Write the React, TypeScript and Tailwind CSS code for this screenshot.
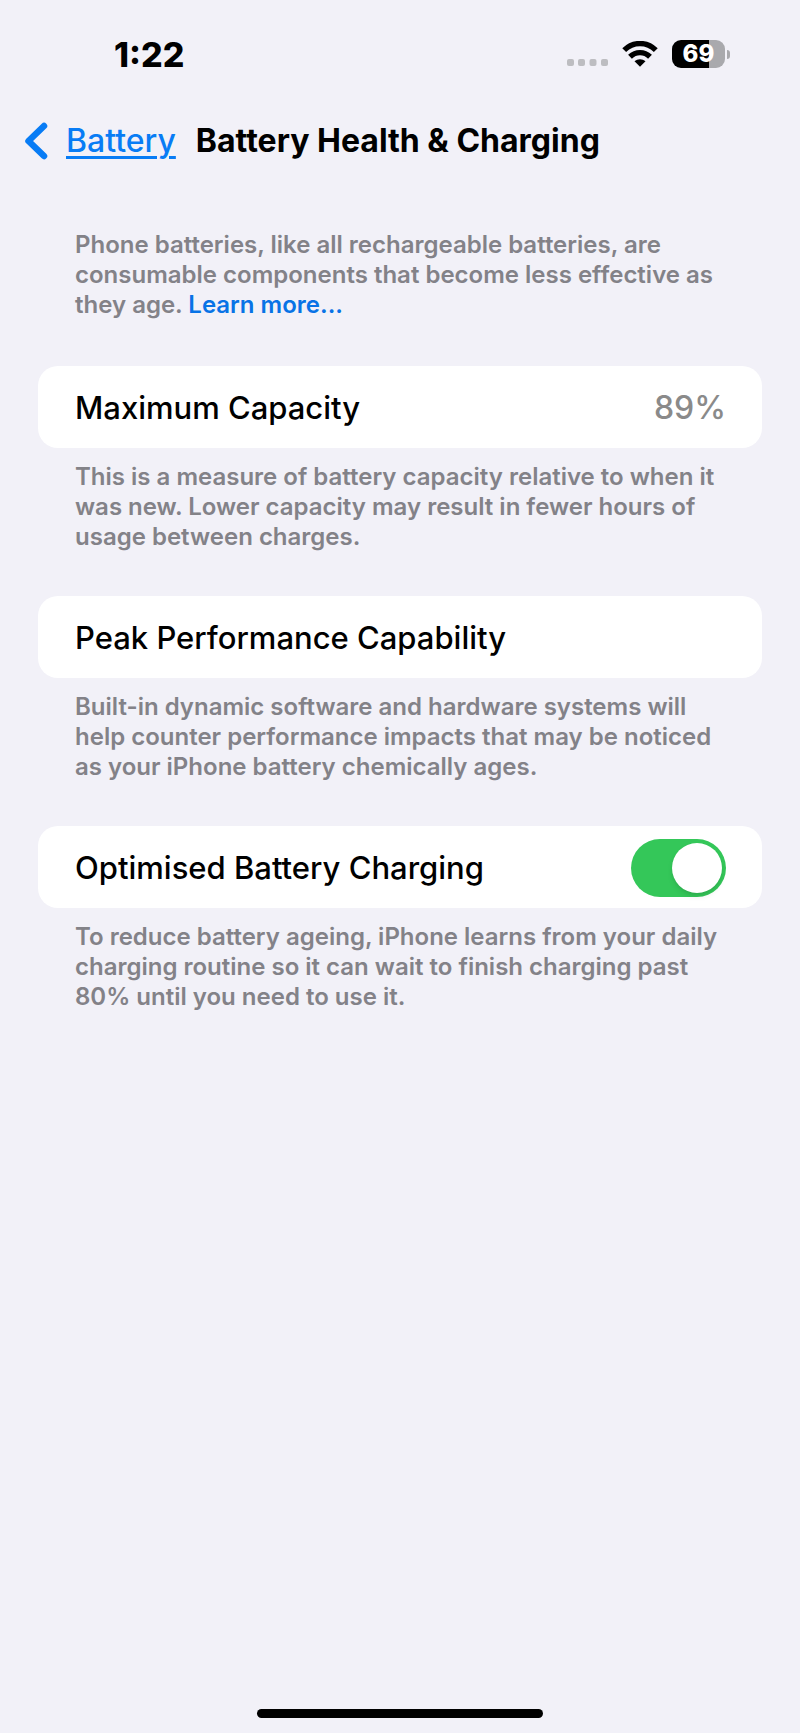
import type { ReactNode } from "react";

function StatusBar() {
  return (
    <div className="flex h-27 items-center justify-between pr-[70px] pl-[114px]">
      <span className="pt-[2px] text-[34px] leading-10 font-extrabold">1:22</span>
      <div className="flex items-center gap-[14px]">
        <svg className="mt-4 h-[7px] w-[41px]" viewBox="0 0 41 7" fill="#bdbdc1" aria-hidden="true">
          <rect x="0" width="7" height="7" rx="2" />
          <rect x="11" width="7" height="7" rx="2" />
          <rect x="22.500" width="7" height="7" rx="2" />
          <rect x="34" width="7" height="7" rx="2" />
        </svg>
        <svg className="h-[26px] w-9" viewBox="0 0 36 26" aria-hidden="true">
          <path d="M2.200 9.200C11 .3 25 .3 33.800 9.200" fill="none" stroke="#000" strokeWidth="5.400" />
          <path d="M8 15.800C13.700 10.200 22.300 10.200 28 15.800" fill="none" stroke="#000" strokeWidth="5.400" />
          <path d="M12.500 20.300C15.500 17.600 20.500 17.600 23.500 20.300L18 25.800Z" />
        </svg>
        <div className="flex items-center gap-[2px]">
          <div className="flex h-7 w-[53px] items-center justify-center rounded-[9px] bg-linear-to-r from-black from-70% to-[#a9a9ad] to-70% text-2xl leading-7 font-extrabold text-white">
            69
          </div>
          <div className="h-[9px] w-[3px] rounded-r-full bg-[#a9a9ad]" />
        </div>
      </div>
    </div>
  );
}

function Section({ children, note }: { children: ReactNode; note: ReactNode }) {
  return (
    <section className="mb-11">
      <div className="flex h-[82px] items-center justify-between rounded-[20px] bg-white pt-[2px] pr-9 pl-[37px] text-[31px] font-medium">
        {children}
      </div>
      <Note className="mt-[14px]">{note}</Note>
    </section>
  );
}

function Note({ children, className = "" }: { children: ReactNode; className?: string }) {
  return (
    <p className={`px-[37px] text-2xl leading-[30px] font-[560] whitespace-nowrap text-[#838288] ${className}`}>
      {children}
    </p>
  );
}

export default function App() {
  return (
    <div className="flex min-h-screen flex-col bg-[#f2f1f8] font-['Inter',sans-serif] text-black">
      <StatusBar />
      <header className="flex h-[66px] items-center pl-6 text-[32px]">
        <a href="#battery" className="flex items-center gap-[18px] text-[#087cf5]">
          <svg className="h-[38px] w-6" viewBox="0 0 24 38" fill="none" stroke="currentColor" strokeWidth="6.500" aria-hidden="true">
            <path d="M20 4 4.500 19 20 34" strokeLinecap="round" strokeLinejoin="round" />
          </svg>
          <span className="font-medium underline decoration-[3px] underline-offset-4">Battery</span>
        </a>
        <h1 className="ml-5 font-bold whitespace-nowrap">Battery Health &amp; Charging</h1>
      </header>

      <main className="px-[38px] pt-14">
        <Note className="mb-[46px]">
          Phone batteries, like all rechargeable batteries, are
          <br />
          consumable components that become less effective as
          <br />
          they age.{" "}
          <a href="#learn-more" className="text-[#0873e6]">
            Learn more...
          </a>
        </Note>

        <Section
          note={
            <>
              This is a measure of battery capacity relative to when it
              <br />
              was new. Lower capacity may result in fewer hours of
              <br />
              usage between charges.
            </>
          }
        >
          <h2>Maximum Capacity</h2>
          <span className="text-[32px] text-[#8a8a8a]">89%</span>
        </Section>

        <Section
          note={
            <>
              Built-in dynamic software and hardware systems will
              <br />
              help counter performance impacts that may be noticed
              <br />
              as your iPhone battery chemically ages.
            </>
          }
        >
          <h2>Peak Performance Capability</h2>
        </Section>

        <Section
          note={
            <>
              To reduce battery ageing, iPhone learns from your daily
              <br />
              charging routine so it can wait to finish charging past
              <br />
              80% until you need to use it.
            </>
          }
        >
          <label htmlFor="optimised">Optimised Battery Charging</label>
          <input
            id="optimised"
            type="checkbox"
            role="switch"
            defaultChecked
            className="flex h-[58px] w-[95px] shrink-0 appearance-none items-center rounded-full bg-[#d9d9de] px-1 before:size-[50px] before:rounded-full before:bg-white before:shadow-md checked:justify-end checked:bg-[#34c759]"
          />
        </Section>
      </main>

      <div className="mx-auto mt-auto mb-[15px] h-[9px] w-[286px] rounded-full bg-black" />
    </div>
  );
}
